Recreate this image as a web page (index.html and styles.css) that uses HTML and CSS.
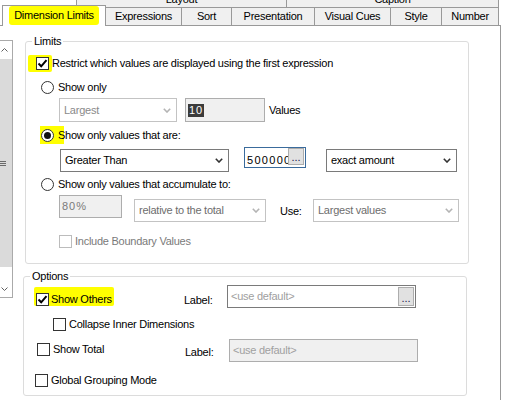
FILE: index.html
```html
<!DOCTYPE html>
<html>
<head>
<meta charset="utf-8">
<link rel="stylesheet" href="styles.css">
</head>
<body>
<div class="tabs-top">
  <div class="ttab layout">Layout</div>
  <div class="ttab caption">Caption</div>
</div>
<div class="tabs">
  <div class="tab sel"><span class="hl-tab">Dimension Limits</span></div>
  <div class="tab expr">Expressions</div>
  <div class="tab sort">Sort</div>
  <div class="tab pres">Presentation</div>
  <div class="tab cues">Visual Cues</div>
  <div class="tab style">Style</div>
  <div class="tab number">Number</div>
</div>
<div class="panel">
  <div class="scroll">
    <div class="sb-btn up"><svg width="7" height="4" viewBox="0 0 7 4"><path d="M0.5 3.5 L3.5 0.5 L6.5 3.5" fill="none" stroke="#606060" stroke-width="1"/></svg></div>
    <div class="sb-thumb"><span class="grip"></span></div>
    <div class="sb-track"></div>
    <div class="sb-btn down"><svg width="7" height="4" viewBox="0 0 7 4"><path d="M0.5 0.5 L3.5 3.5 L6.5 0.5" fill="none" stroke="#606060" stroke-width="1"/></svg></div>
  </div>
  <div class="groups">
    <fieldset class="group limits">
      <legend>Limits</legend>
      <div class="row l1">
        <span class="hl-cb"><span class="cb"><svg width="11" height="11" viewBox="0 0 11 11"><path d="M1.5 5.5 L4.2 8.3 L9.5 2.2" fill="none" stroke="#000" stroke-width="2"/></svg></span></span>
        <span>Restrict which values are displayed using the first expression</span>
      </div>
      <div class="row l2">
        <span class="radio"></span><span class="rtxt">Show only</span>
      </div>
      <div class="row l3">
        <div class="dd dis w-largest"><span class="gray">Largest</span><svg width="8" height="5" viewBox="0 0 8 5"><path d="M0.8 0.8 L4 4 L7.2 0.8" fill="none" stroke="#b4b4b4" stroke-width="1.6"/></svg></div>
        <div class="tb w-ten"><span class="sel-text num">10</span></div>
        <span class="values">Values</span>
      </div>
      <div class="row l4">
        <span class="hl-radio"><span class="radio on"></span><span class="rtxt">Show only values that are:</span></span>
      </div>
      <div class="row top l5">
        <div class="dd w-greater"><span>Greater Than</span><svg width="8" height="5" viewBox="0 0 8 5"><path d="M0.8 0.8 L4 4 L7.2 0.8" fill="none" stroke="#333" stroke-width="1.6"/></svg></div>
        <div class="tb focus w-amount"><span class="amount">500000</span><span class="btn btn1">...</span></div>
        <div class="dd w-exact"><span>exact amount</span><svg width="8" height="5" viewBox="0 0 8 5"><path d="M0.8 0.8 L4 4 L7.2 0.8" fill="none" stroke="#333" stroke-width="1.6"/></svg></div>
      </div>
      <div class="row l6">
        <span class="radio"></span><span class="rtxt">Show only values that accumulate to:</span>
      </div>
      <div class="row top l7">
        <div class="tb w-pct"><span class="dis-text num">80%</span></div>
        <div class="dd dis w-relative"><span>relative to the total</span><svg width="8" height="5" viewBox="0 0 8 5"><path d="M0.8 0.8 L4 4 L7.2 0.8" fill="none" stroke="#b4b4b4" stroke-width="1.6"/></svg></div>
        <span class="use">Use:</span>
        <div class="dd dis w-use"><span>Largest values</span><svg width="8" height="5" viewBox="0 0 8 5"><path d="M0.8 0.8 L4 4 L7.2 0.8" fill="none" stroke="#b4b4b4" stroke-width="1.6"/></svg></div>
      </div>
      <div class="row l8">
        <span class="cb dis"></span><span class="cbtxt dis-text">Include Boundary Values</span>
      </div>
    </fieldset>

    <fieldset class="group options">
      <legend>Options</legend>
      <div class="row top o1">
        <div class="c1"><span class="hl-others"><span class="cb"><svg width="11" height="11" viewBox="0 0 11 11"><path d="M1.5 5.5 L4.2 8.3 L9.5 2.2" fill="none" stroke="#000" stroke-width="2"/></svg></span><span class="otxt">Show Others</span></span></div>
        <span class="lab lab1">Label:</span>
        <div class="inp w-inp"><span class="ph">&lt;use default&gt;</span><span class="btn btn2">...</span></div>
      </div>
      <div class="row o2">
        <span class="cb"></span><span class="cbtxt">Collapse Inner Dimensions</span>
      </div>
      <div class="row top o3">
        <div class="c3"><span class="cb"></span><span class="cbtxt">Show Total</span></div>
        <span class="lab lab3">Label:</span>
        <div class="inp dis w-inp"><span class="ph">&lt;use default&gt;</span></div>
      </div>
      <div class="row o4">
        <span class="cb"></span><span class="cbtxt">Global Grouping Mode</span>
      </div>
    </fieldset>
  </div>
</div>
</body>
</html>
```

FILE: styles.css
```css
* { box-sizing: border-box; }
html, body { margin: 0; padding: 0; }
body {
  width: 506px;
  height: 400px;
  overflow: hidden;
  background: #fff;
  font-family: "Liberation Sans", Arial, sans-serif;
  font-size: 11px;
  line-height: 13px;
  letter-spacing: -0.25px;
  color: #000;
}

/* top (back) tab row */
.tabs-top { display: flex; height: 7px; overflow: hidden; padding-left: 76px; }
.ttab {
  height: 20px;
  margin-top: -7px;
  line-height: 13px;
  text-align: center;
  background: #f0f0f0;
  border-left: 1px solid #999;
}
.ttab.layout { width: 210px; }
.ttab.caption { width: 213px; border-right: 1px solid #999; }

/* front tab row */
.tabs { display: flex; align-items: flex-end; height: 18px; padding-left: 2px; }
.tab {
  height: 18px;
  line-height: 17px;
  text-align: center;
  white-space: nowrap;
  background: #f0f0f0;
  border-top: 1px solid #999;
  border-left: 1px solid #999;
}
.tab.sel {
  position: relative;
  z-index: 1;
  width: 104px;
  height: 21px;
  margin-bottom: -1px;
  line-height: 19px;
  background: #fff;
  border-right: 1px solid #999;
}
.tab.expr { width: 75px; border-left: none; }
.tab.sort { width: 50px; }
.tab.pres { width: 83px; }
.tab.cues { width: 76px; }
.tab.style { width: 51px; }
.tab.number { width: 58px; border-right: 1px solid #999; }
.hl-tab { display: inline-block; padding: 0 5px; background: #ffff00; border-radius: 3px; }

/* panel */
.panel {
  display: flex;
  align-items: flex-start;
  width: 501px;
  height: 375px;
  border-top: 1px solid #999;
  border-right: 1px solid #999;
}

/* clipped scrollbar at the left */
.scroll {
  flex: none;
  width: 13px;
  height: 258px;
  margin-top: 14px;
  border: 1px solid #aaa;
  border-left: none;
  display: flex;
  flex-direction: column;
}
.sb-btn { height: 18px; display: flex; align-items: center; padding-left: 1px; background: #fff; }
.sb-btn svg { display: block; }
.sb-btn.down { height: 16px; }
.sb-thumb { height: 208px; background: #dadada; display: flex; align-items: center; }
.sb-track { height: 14px; background: #fff; }
.grip { width: 6px; height: 5px; background: repeating-linear-gradient(#6a6a6a 0 1px, transparent 1px 2px); }

/* group boxes */
.groups { display: flex; flex-direction: column; }
.group {
  margin: 0;
  padding: 0;
  width: 444px;
  min-width: 0;
  border: 1px solid #dcdcdc;
  border-radius: 3px;
}
.group legend { padding: 0 2px; margin-left: 6px; line-height: 13px; }
.limits { margin: 9px 0 0 12px; padding-bottom: 14px; }
.options { margin: 6px 0 0 10px; padding-bottom: 7px; }

.row { display: flex; align-items: center; height: 16px; white-space: nowrap; }
.row.top { align-items: flex-start; }

/* controls */
.cb {
  flex: none;
  width: 13px;
  height: 13px;
  border: 1px solid #333;
  background: #fff;
  display: flex;
  align-items: center;
  justify-content: center;
}
.cb svg { display: block; }
.cb.dis { border-color: #bcbcbc; }
.radio {
  flex: none;
  width: 13px;
  height: 13px;
  border: 1px solid #333;
  border-radius: 50%;
  background: #fff;
  display: flex;
  align-items: center;
  justify-content: center;
}
.radio.on::after { content: ""; width: 7px; height: 7px; border-radius: 50%; background: #111; }

.dd {
  flex: none;
  height: 23px;
  display: flex;
  align-items: center;
  justify-content: space-between;
  padding: 0 5px 0 4px;
  border: 1px solid #7a7a7a;
  background: #fff;
}
.dd svg { flex: none; display: block; }
.dd.dis { border-color: #c3c3c3; color: #6d6d6d; }
.gray { color: #8a8a8a; }

.tb {
  flex: none;
  height: 23px;
  display: flex;
  align-items: center;
  padding-left: 2px;
  border: 1px solid #adadad;
  background: #f0f0f0;
}
.tb.focus { align-items: flex-start; padding: 0 1px 0 2px; border-color: #3a6b9c; background: #fff; }
.num { letter-spacing: 1px; }
.sel-text { background: #3b3b3b; color: #fff; padding: 0 1px; }
.dis-text { color: #7a7a7a; }
.amount { flex: 1; overflow: hidden; margin-top: 6px; letter-spacing: 1.3px; }

.btn {
  flex: none;
  display: flex;
  justify-content: center;
  align-items: flex-end;
  background: #e1e1e1;
  border: 1px solid #adadad;
  line-height: 13px;
  letter-spacing: 0;
  color: #1a1a4a;
}
.btn1 { width: 16px; height: 17px; }
.btn2 { width: 16px; height: 19px; margin-top: 1px; }

/* limits rows */
.l1 { margin-top: 7px; margin-left: 2px; }
.hl-cb {
  display: flex;
  align-items: center;
  height: 17px;
  padding: 0 3px 0 8px;
  background: #ffff00;
  border-radius: 2px;
}
.l2 { margin-top: 8px; margin-left: 15px; }
.rtxt { margin-left: 4px; }
.l3 { margin-top: 3px; height: 24px; margin-left: 33px; }
.w-largest { width: 118px; height: 24px; }
.w-ten { width: 80px; height: 24px; margin-left: 8px; }
.values { margin-left: 4px; }
.l4 { margin-top: 4px; height: 18px; margin-left: 14px; }
.hl-radio {
  display: flex;
  align-items: center;
  height: 18px;
  padding-left: 1px;
  background: linear-gradient(#ffff00, #ffff00) no-repeat 0 0 / 24px 18px;
}
.l5 { margin-top: 3px; height: 25px; }
.w-greater { width: 169px; margin: 2px 0 0 34px; }
.w-amount { width: 62px; height: 21px; margin-left: 15px; }
.w-exact { width: 131px; margin: 2px 0 0 20px; }
.l6 { margin-top: 4px; margin-left: 15px; }
.l7 { margin-top: 3px; height: 27px; }
.w-pct { width: 63px; margin-left: 33px; }
.w-relative { width: 132px; margin: 4px 0 0 12px; }
.use { width: 33px; margin: 10px 0 0 14px; }
.w-use { width: 146px; margin-top: 4px; }
.l8 { margin-top: 11px; margin-left: 33px; }
.cbtxt { margin-left: 3px; }

/* options rows */
.o1 { margin-top: 2px; height: 23px; }
.c1 { width: 160px; display: flex; }
.hl-others {
  display: flex;
  align-items: center;
  height: 19px;
  margin: 2px 0 0 10px;
  padding: 6px 2px 0 2px;
  background: #ffff00;
  border-radius: 2px;
}
.otxt { margin-left: 2px; }
.lab1 { width: 43px; margin-top: 9px; }
.w-inp { width: 189px; height: 23px; }
.inp {
  display: flex;
  justify-content: space-between;
  align-items: flex-start;
  padding: 0 1px 0 3px;
  border: 1px solid #7a7a7a;
  background: #fff;
}
.inp .ph { line-height: 21px; color: #a0a0a0; }
.inp.dis { border-color: #adadad; background: #f0f0f0; }
.o2 { margin-top: 8px; margin-left: 29px; }
.o3 { margin-top: 7px; height: 23px; }
.c3 { width: 161px; height: 13px; margin-top: 4px; padding-left: 13px; display: flex; align-items: center; }
.lab3 { width: 44px; margin-top: 7px; }
.o4 { margin-top: 10px; margin-left: 11px; }
```
